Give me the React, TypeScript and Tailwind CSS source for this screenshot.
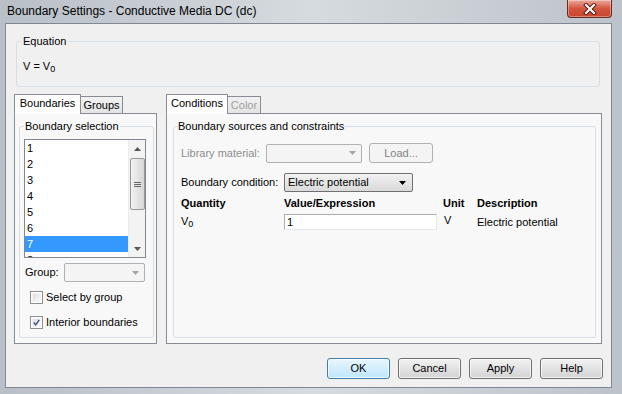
import React from 'react';

function CloseButton() {
  return (
    <div className="w-[45px] h-[18px] rounded-b-[4px] border border-t-0 border-[#6b2a20] bg-gradient-to-b from-[#e9a99b] via-[#d4543f] to-[#c9452c] flex items-center justify-center shadow-[inset_0_0_0_1px_rgba(255,255,255,0.35)]">
      <svg width="14" height="12" viewBox="0 0 14 12">
        <path d="M3 2 L11 10 M11 2 L3 10" stroke="#5a1d14" strokeWidth="4" strokeLinecap="square" />
        <path d="M3 2 L11 10 M11 2 L3 10" stroke="#ffffff" strokeWidth="2" strokeLinecap="square" />
      </svg>
    </div>
  );
}

function Arrow({ color }: { color: string }) {
  return (
    <svg width="7" height="4" viewBox="0 0 7 4">
      <polygon points="0,0 7,0 3.5,4" fill={color} />
    </svg>
  );
}

function Checkbox({ checked }: { checked?: boolean }) {
  return (
    <div className="w-[13px] h-[13px] border border-[#8e8f8f] bg-white p-[1px]">
      <div className="w-full h-full bg-gradient-to-br from-[#dcdcdc] to-[#fbfbfb] border border-[#f4f4f4] flex items-center justify-center">
        {checked && (
          <svg width="9" height="9" viewBox="0 0 9 9">
            <path d="M1 4.5 L3.5 7.5 L8 1" stroke="#3d4e85" strokeWidth="1.8" fill="none" />
          </svg>
        )}
      </div>
    </div>
  );
}

function Button({ label, primary }: { label: string; primary?: boolean }) {
  return (
    <div
      className={
        primary
          ? 'w-[63px] h-[21px] rounded-[3px] border border-[#3c7fb1] bg-gradient-to-b from-[#eaf6fd] to-[#bee6fd] flex items-center justify-center shadow-[inset_0_0_0_1px_rgba(255,255,255,0.7)]'
          : 'w-[63px] h-[21px] rounded-[3px] border border-[#707070] bg-gradient-to-b from-[#f2f2f2] to-[#d3d3d3] flex items-center justify-center shadow-[inset_0_0_0_1px_rgba(255,255,255,0.7)]'
      }
    >
      {label}
    </div>
  );
}

function Listbox() {
  const items = ['1', '2', '3', '4', '5', '6', '7', '8'];
  return (
    <div className="w-[122px] h-[119px] border border-[#828790] bg-white flex overflow-hidden">
      <div className="flex-1 overflow-hidden">
        {items.map((it) => (
          <div
            key={it}
            className={it === '7' ? 'h-[16px] leading-[16px] pl-[2px] bg-[#3399ff] text-white' : 'h-[16px] leading-[16px] pl-[2px]'}
          >
            {it}
          </div>
        ))}
      </div>
      <div className="w-[17px] h-full bg-[#f3f3f3] border-l border-[#ececec] flex flex-col items-center">
        <div className="h-[17px] w-full flex items-center justify-center">
          <svg width="7" height="4" viewBox="0 0 7 4">
            <polygon points="0,4 7,4 3.5,0" fill="#555" />
          </svg>
        </div>
        <div className="mt-[1px] w-[15px] h-[52px] rounded-[2px] border border-[#979797] bg-gradient-to-r from-[#f2f2f2] to-[#d6d6d6] flex flex-col items-center justify-center gap-[1px]">
          <div className="w-[7px] h-[1px] bg-[#666]" />
          <div className="w-[7px] h-[1px] bg-[#666]" />
          <div className="w-[7px] h-[1px] bg-[#666]" />
        </div>
        <div className="flex-1" />
        <div className="h-[17px] w-full flex items-center justify-center">
          <Arrow color="#555" />
        </div>
      </div>
    </div>
  );
}

export default function App() {
  return (
    <div className="w-[622px] h-[394px] overflow-hidden flex flex-col bg-gradient-to-r from-[#b8bfc7] via-[#d6dbdf] to-[#bdc3ca] font-['Liberation_Sans',Arial,sans-serif] text-[11px] leading-[13px] text-black">
      <div className="h-[23px] flex items-start justify-between pl-[7px] pr-[10px]">
        <span className="mt-[4px] text-[12px] leading-[14px]">Boundary Settings - Conductive Media DC (dc)</span>
        <CloseButton />
      </div>

      <div className="ml-[5px] w-[607px] h-[365px] border border-[#7f8892] bg-[#f0f0f0] flex flex-col">
        <fieldset className="mt-[11px] ml-[10px] w-[584px] border border-[#d5dfe5] rounded-[3px] pl-[4px] pb-[13px]">
          <legend className="px-[2px] leading-[13px]">Equation</legend>
          <div className="pl-[2px] pt-[12px] leading-[13px]">
            V = V<sub className="text-[9px] relative top-[2px] align-baseline">0</sub>
          </div>
        </fieldset>

        <div className="mt-[7px] ml-[8px] flex gap-[9px]">
          <div className="w-[143px] flex flex-col">
            <div className="h-[19px] flex items-end">
              <div className="relative z-10 w-[67px] h-[20px] -mb-[1px] bg-white border border-b-0 border-[#898c95] pt-[2px] text-center">
                Boundaries
              </div>
              <div className="w-[42px] h-[17px] border border-b-0 border-l-0 border-[#898c95] bg-gradient-to-b from-[#f2f2f2] to-[#e3e3e3] pt-[2px] text-center">
                Groups
              </div>
            </div>
            <div className="h-[231px] border border-[#898c95] bg-[#f8f8f8]">
              <fieldset className="ml-[4px] mt-[6px] w-[135px] h-[218px] border border-[#d5dfe5] rounded-[3px] pl-[4px]">
                <legend className="px-[1px] leading-[13px]">Boundary selection</legend>
                <div className="mt-[6px]">
                  <Listbox />
                </div>
                <div className="mt-[5px] h-[19px] flex items-center">
                  <span className="w-[40px] pl-[1px]">Group:</span>
                  <div className="w-[81px] h-[19px] border border-[#adb2b5] rounded-[2px] bg-[#f4f4f4] flex items-center justify-end pr-[5px]">
                    <Arrow color="#a6a6a6" />
                  </div>
                </div>
                <div className="mt-[9px] ml-[6px] flex items-center gap-[3px]">
                  <Checkbox />
                  <span>Select by group</span>
                </div>
                <div className="mt-[12px] ml-[6px] flex items-center gap-[3px]">
                  <Checkbox checked />
                  <span>Interior boundaries</span>
                </div>
              </fieldset>
            </div>
          </div>

          <div className="w-[436px] flex flex-col">
            <div className="h-[19px] flex items-end">
              <div className="relative z-10 w-[62px] h-[20px] -mb-[1px] bg-white border border-b-0 border-[#898c95] pt-[2px] text-center">
                Conditions
              </div>
              <div className="w-[33px] h-[17px] border border-b-0 border-l-0 border-[#898c95] bg-gradient-to-b from-[#f2f2f2] to-[#e3e3e3] pt-[2px] text-center text-[#a0a0a0]">
                Color
              </div>
            </div>
            <div className="h-[231px] border border-[#898c95] bg-[#f8f8f8]">
              <fieldset className="ml-[6px] mt-[6px] w-[423px] h-[218px] border border-[#d5dfe5] rounded-[3px] pl-[4px]">
                <legend className="leading-[13px]">Boundary sources and constraints</legend>
                <div className="pl-[3px]">
                  <div className="mt-[10px] h-[20px] flex items-center text-[#8d8d8d]">
                    <span className="w-[85px]">Library material:</span>
                    <div className="w-[96px] h-[19px] border border-[#adb2b5] rounded-[2px] bg-[#f4f4f4] flex items-center justify-end pr-[5px]">
                      <Arrow color="#a6a6a6" />
                    </div>
                    <div className="ml-[7px] w-[64px] h-[20px] border border-[#adb2b5] rounded-[3px] bg-[#f4f4f4] flex items-center justify-center text-[#838383]">
                      Load...
                    </div>
                  </div>
                  <div className="mt-[10px] h-[19px] flex items-center">
                    <span className="w-[103px]">Boundary condition:</span>
                    <div className="w-[129px] h-[19px] border border-[#707070] rounded-[2px] bg-gradient-to-b from-[#f2f2f2] to-[#dadada] flex items-center justify-between pl-[3px] pr-[6px]">
                      <span>Electric potential</span>
                      <Arrow color="#000000" />
                    </div>
                  </div>
                  <div className="mt-[5px] grid grid-cols-[103px_159px_34px_1fr] font-bold">
                    <span>Quantity</span>
                    <span>Value/Expression</span>
                    <span>Unit</span>
                    <span>Description</span>
                  </div>
                  <div className="mt-[4px] grid grid-cols-[103px_159px_34px_1fr] items-start">
                    <span className="pt-[1px]">
                      V<sub className="text-[9px] relative top-[2px] align-baseline">0</sub>
                    </span>
                    <div className="w-[153px] h-[16px] border border-[#abadb3] border-b-[#e3e9ef] border-r-[#e3e9ef] bg-white pl-[2px] leading-[14px]">
                      1
                    </div>
                    <span className="pl-[1px]">V</span>
                    <span className="pt-[2px]">Electric potential</span>
                  </div>
                </div>
              </fieldset>
            </div>
          </div>
        </div>

        <div className="mt-[14px] pr-[8px] flex justify-end gap-[8px]">
          <Button label="OK" primary />
          <Button label="Cancel" />
          <Button label="Apply" />
          <Button label="Help" />
        </div>
      </div>
    </div>
  );
}
